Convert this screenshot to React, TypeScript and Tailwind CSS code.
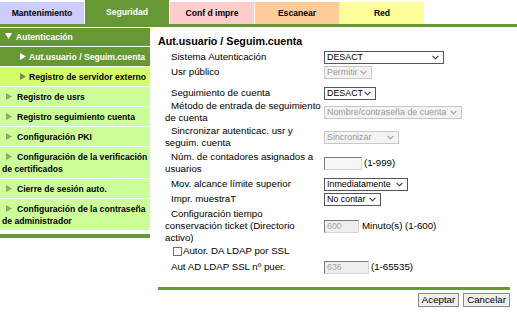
import React from "react";

function Tab({ children, cls }: { children: React.ReactNode; cls: string }) {
  return (
    <div className={`flex items-center justify-center w-[84px] text-[8.6px] font-bold ${cls}`}>
      {children}
    </div>
  );
}

function Tri({ color, down }: { color: string; down?: boolean }) {
  return down ? (
    <svg width="7" height="6" viewBox="0 0 7 6" className="inline-block align-[1px]">
      <polygon points="0,0 7,0 3.5,6" fill={color} />
    </svg>
  ) : (
    <svg width="6" height="7" viewBox="0 0 6 7" className="inline-block align-[0px]">
      <polygon points="0,0 6,3.5 0,7" fill={color} />
    </svg>
  );
}

function Chevron({ color }: { color: string }) {
  return (
    <svg width="7" height="5" viewBox="0 0 7 5" className="shrink-0">
      <polyline points="0.6,0.8 3.5,3.8 6.4,0.8" fill="none" stroke={color} strokeWidth="1.1" />
    </svg>
  );
}

function Sel({ w, text, disabled }: { w: string; text: string; disabled?: boolean }) {
  return (
    <div
      className={`flex items-center justify-between h-[13px] pl-[2px] pr-[4px] border text-[8.9px] leading-[11px] ${w} ${
        disabled ? "border-[#c8c8c8] bg-[#f3f3f3] text-[#9a9a9a]" : "border-[#555555] bg-white text-black"
      }`}
    >
      <span className="whitespace-nowrap">{text}</span>
      <Chevron color={disabled ? "#9a9a9a" : "#333333"} />
    </div>
  );
}

function Inp({ w, text, disabled }: { w: string; text?: string; disabled?: boolean }) {
  return (
    <div
      className={`flex items-center h-[13px] pl-[2px] border border-t-[#7a7a7a] border-l-[#7a7a7a] border-b-[#d4d4d4] border-r-[#d4d4d4] text-[8.9px] leading-[11px] text-[#a8a8a8] ${w} ${
        disabled ? "bg-[#eeeeee]" : "bg-[#f7f7f7]"
      }`}
    >
      {text}
    </div>
  );
}

function Row({ mt, label, children }: { mt: string; label: React.ReactNode; children: React.ReactNode }) {
  return (
    <div className={`flex items-center ${mt}`}>
      <div className="w-[166px] shrink-0 pl-[7px] indent-[6px] text-[9.7px] leading-[12px]">{label}</div>
      <div className="flex items-center text-[9.7px] leading-[12px] min-h-[14px]">{children}</div>
    </div>
  );
}

function Side({
  children,
  dark,
  hl,
  nested,
  first,
}: {
  children: React.ReactNode;
  dark?: boolean;
  hl?: boolean;
  nested?: boolean;
  first?: boolean;
}) {
  const bg = dark ? "bg-[#669933] text-white" : hl ? "bg-[#d4ff6a] text-black" : "bg-[#ccff99] text-black";
  const arrowColor = dark ? "#ffffff" : hl ? "#7d8a4a" : "#8fa868";
  return (
    <div
      className={`${bg} border-b border-white pl-[2px] pr-[1px] text-[8.6px] font-bold leading-[12px] ${
        first ? "pt-[3px] pb-[3px] indent-[3px]" : "pt-[4px] pb-[3px]"
      } ${nested ? "indent-[18px]" : first ? "" : "indent-[4px]"}`}
    >
      {first ? <Tri color={arrowColor} down /> : <Tri color={arrowColor} />}
      <span className={first ? "ml-[4px]" : nested ? "ml-[3px]" : "ml-[5px]"}>{children}</span>
    </div>
  );
}

export default function App() {
  return (
    <div className="w-[517px] h-[316px] bg-white overflow-hidden font-['Liberation_Sans',Arial,sans-serif] text-black">
      <div className="flex gap-[1px] h-[24px]">
        <Tab cls="mt-[2px] h-[22px] bg-[#ccccff] text-black">Mantenimiento</Tab>
        <Tab cls="h-[24px] bg-[#669933] text-white">Seguridad</Tab>
        <Tab cls="mt-[2px] h-[22px] bg-[#ffcccc] text-black">Conf d impre</Tab>
        <Tab cls="mt-[2px] h-[22px] bg-[#ffcc99] text-black">Escanear</Tab>
        <Tab cls="mt-[2px] h-[22px] bg-[#ffff99] text-black">Red</Tab>
      </div>
      <div className="h-[3px] bg-[#669933]" />
      <div className="flex">
        <div className="w-[150px] shrink-0 pt-[1px]">
          <Side dark first>Autenticación</Side>
          <Side dark nested>Aut.usuario / Seguim.cuenta</Side>
          <Side hl nested>Registro de servidor externo</Side>
          <Side>Registro de usrs</Side>
          <Side>Registro seguimiento cuenta</Side>
          <Side>Configuración PKI</Side>
          <Side>Configuración de la verificación de certificados</Side>
          <Side>Cierre de sesión auto.</Side>
          <Side>Configuración de la contraseña de administrador</Side>
          <div className="mt-[3px] h-[4px] bg-[#669933]" />
        </div>
        <div className="ml-[8px] w-[352px]">
          <div className="pt-[7px] text-[10.7px] font-bold leading-[14px]">Aut.usuario / Seguim.cuenta</div>
          <Row mt="mt-[2px]" label="Sistema Autenticación">
            <Sel w="w-[120px]" text="DESACT" />
          </Row>
          <Row mt="mt-[1px]" label="Usr público">
            <Sel w="w-[48px]" text="Permitir" disabled />
          </Row>
          <Row mt="mt-[7px]" label="Seguimiento de cuenta">
            <Sel w="w-[52px]" text="DESACT" />
          </Row>
          <Row
            mt="mt-[0px]"
            label={
              <>
                Método de entrada de seguimiento
                <br />
                de cuenta
              </>
            }
          >
            <Sel w="w-[138px]" text="Nombre/contraseña de cuenta" disabled />
          </Row>
          <Row
            mt="mt-[1px]"
            label={
              <>
                Sincronizar autenticac. usr y
                <br />
                seguim. cuenta
              </>
            }
          >
            <Sel w="w-[75px]" text="Sincronizar" disabled />
          </Row>
          <Row
            mt="mt-[2px]"
            label={
              <>
                Núm. de contadores asignados a
                <br />
                usuarios
              </>
            }
          >
            <Inp w="w-[38px]" />
            <span className="ml-[2px]">(1-999)</span>
          </Row>
          <Row mt="mt-[2px]" label="Mov. alcance límite superior">
            <Sel w="w-[84px]" text="Inmediatamente" />
          </Row>
          <Row mt="mt-[1px]" label="Impr. muestraT">
            <Sel w="w-[57px]" text="No contar" />
          </Row>
          <Row
            mt="mt-[2px]"
            label={
              <>
                Configuración tiempo
                <br />
                conservación ticket (Directorio
                <br />
                activo)
              </>
            }
          >
            <Inp w="w-[35px]" text="600" disabled />
            <span className="ml-[3px]">Minuto(s) (1-600)</span>
          </Row>
          <div className="flex items-center h-[14px] pl-[15px] text-[9.7px] leading-[12px]">
            <div className="w-[9px] h-[9px] border border-[#707070] bg-white mr-[1px]" />
            <span>Autor. DA LDAP por SSL</span>
          </div>
          <Row mt="mt-[2px]" label="Aut AD LDAP SSL nº puer.">
            <Inp w="w-[45px]" text="636" disabled />
            <span className="ml-[2px]">(1-65535)</span>
          </Row>
          <div className="mt-[13px] h-[3px] bg-[#669933]" />
          <div className="flex justify-end gap-[4px] mt-[3px]">
            <div className="h-[14px] px-[3px] flex items-center border border-[#8a8a8a] bg-[#efefef] text-[9.7px]">
              Aceptar
            </div>
            <div className="h-[14px] px-[3px] flex items-center border border-[#8a8a8a] bg-[#efefef] text-[9.7px]">
              Cancelar
            </div>
          </div>
        </div>
      </div>
    </div>
  );
}
